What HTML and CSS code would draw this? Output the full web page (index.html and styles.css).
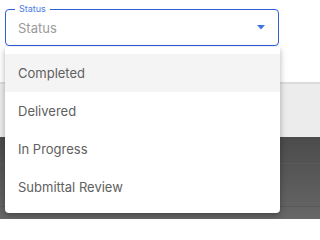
FILE: index.html
```html
<!DOCTYPE html>
<html>
<head>
<meta charset="utf-8">
<link rel="stylesheet" href="styles.css">
</head>
<body>
<div class="page">
  <div class="bg-top"></div>
  <div class="bg-line"></div>
  <div class="bg-light"></div>
  <div class="bg-dark">
    <div class="dark-row"></div>
    <div class="dark-row"></div>
  </div>
  <div class="field-wrap">
    <div class="field">
      <span class="label">Status</span>
      <span class="value">Status</span>
      <svg class="arrow" width="8" height="5" viewBox="0 0 8 5"><path d="M0 0H8L4 4.5Z" fill="#3e74e0"/></svg>
    </div>
    <ul class="menu">
      <li class="item active">Completed</li>
      <li class="item">Delivered</li>
      <li class="item">In Progress</li>
      <li class="item">Submittal Review</li>
    </ul>
  </div>
</div>
</body>
</html>
```

FILE: styles.css
```css
html, body { margin: 0; padding: 0; }
body {
  height: 219px;
  overflow: hidden;
  font-family: "Inter", "Open Sans", sans-serif;
}
.page { position: relative; width: 100%; height: 219px; }
.bg-top { height: 82px; background: #ffffff; }
.bg-line { height: 2px; background: #dcdcdc; }
.bg-light { height: 53px; background: #ececec; }
.bg-dark {
  height: 82px;
  background: linear-gradient(#4b4b4b, #676767);
  display: flex;
  flex-direction: column;
}
.dark-row { height: 26px; border-bottom: 1px solid #5a5a5a; }
.dark-row + .dark-row { height: 42px; }
.field-wrap {
  position: absolute;
  left: 5px;
  top: 9px;
  width: 275px;
}
.field {
  position: relative;
  box-sizing: border-box;
  width: 274px;
  height: 37px;
  border: 1px solid #2d5fd8;
  border-radius: 4px;
  display: flex;
  align-items: center;
  padding: 0 12px 0 12px;
  background: #fff;
}
.label {
  position: absolute;
  left: 9px;
  top: -7px;
  padding: 0 4px;
  background: #fff;
  font-size: 9px;
  line-height: 12px;
  color: #4a7be6;
}
.value {
  flex: 1;
  font-size: 13px;
  color: #9a9a9a;
  padding-top: 1px;
}
.arrow { margin-right: 1px; }
.menu {
  position: absolute;
  left: 0;
  top: 38px;
  width: 275px;
  margin: 0;
  padding: 7px 0;
  list-style: none;
  background: #fff;
  border-radius: 0 0 4px 4px;
  box-shadow: 0 3px 5px rgba(0,0,0,0.2), 0 1px 10px rgba(0,0,0,0.12);
}
.item {
  height: 38px;
  display: flex;
  align-items: center;
  padding-left: 13px;
  font-size: 13px;
  color: #606060;
}
.item.active { background: #f4f4f4; }
```
